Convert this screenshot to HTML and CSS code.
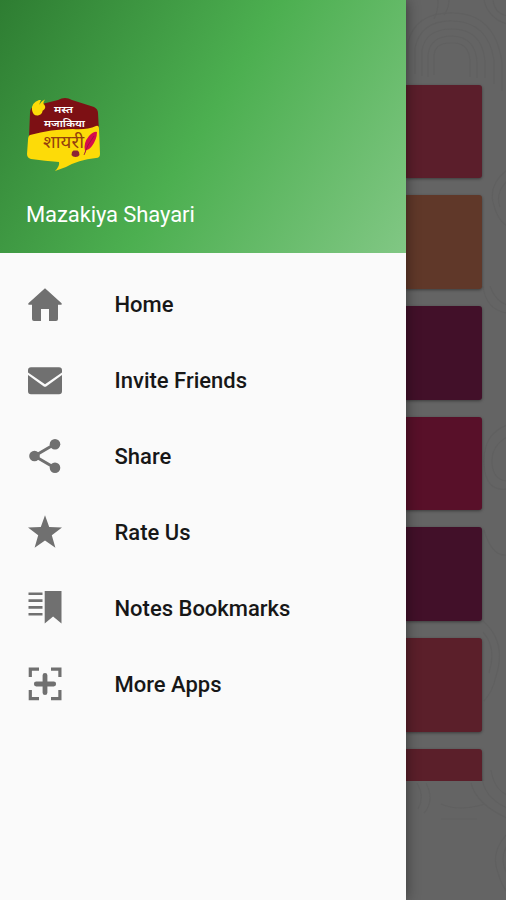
FILE: index.html
```html
<!DOCTYPE html>
<html lang="en">
<head>
<meta charset="utf-8">
<title>Mazakiya Shayari</title>
<link rel="stylesheet" href="styles.css">
</head>
<body>
<div class="screen">
  <aside class="drawer">
    <header class="drawer-header">
      <svg class="logo" viewBox="0 0 76 76">
        <path d="M4 16Q4 11 8 9L32 3Q39-1 46 3L68 10Q72 12 72 16L73 35L3 41Z" fill="#7d1014"/>
        <path d="M4 38Q25 32 47 32Q61 33 70 29Q73 28 73 32L74 57Q74 61 70 61Q52 63 40 70L29 74Q34 69 33 65Q19 64 5 62Q1 61 1 57L2 43Q2 39 4 38Z" fill="#fddb08"/>
        <path d="M13 3Q5 6 6 13Q7 19 12 18.5Q18 17 16 11L13.500 9.500Q13 6 15 3ZM19 2.500Q13 5 13.500 10Q15 15 17 13.500Q20.500 11 18.500 8L17.500 7Q17 5 19 2.500Z" fill="#fddb08"/>
        <text class="logo-small" x="28" y="16" textLength="19" lengthAdjust="spacingAndGlyphs">मस्त</text>
        <text class="logo-small" x="18" y="30" textLength="41" lengthAdjust="spacingAndGlyphs">मजाकिया</text>
        <text class="logo-large" x="17" y="50.500" textLength="41" lengthAdjust="spacingAndGlyphs">शायरी</text>
        <path d="M59 54Q57 46 63 39Q68 34 71 35Q71 42 66 49Q63 53 60 53L58.500 58" fill="#d70c4c"/>
        <path d="M58 58Q61 48 68 39" fill="none" stroke="#8f1740" stroke-width=".8"/>
        <path d="M46 55l1.500-1.500h4L53 55l.5 3q-1 2-4 2t-4-2z" fill="#8b2435"/>
      </svg>
      <div class="app-name">Mazakiya Shayari</div>
    </header>
    <nav class="menu">
      <a class="item"><svg class="icon" viewBox="0 0 36 36"><path d="M18 1.2 1.400 16.200Q.6 17.800 2.200 17.800H5V32Q5 34 7 34H14V22H22V34H29Q31 34 31 32V17.800H33.800Q35.400 17.800 34.600 16.200Z"/></svg>Home</a>
      <a class="item"><svg class="icon" viewBox="0 0 36 36"><path d="M4 4.300H32Q35 4.300 35 7.300V9.500L18 21.300 1 9.500V7.300Q1 4.300 4 4.300ZM1 12 16.500 23.300Q18 24.400 19.500 23.300L35 12V28.300Q35 31.300 32 31.300H4Q1 31.300 1 28.300Z"/></svg>Invite Friends</a>
      <a class="item"><svg class="icon" viewBox="0 0 36 36"><path d="M28 6 7.500 18 28 30" fill="none" stroke="#707070" stroke-width="3"/><circle cx="28" cy="6.200" r="5.300"/><circle cx="7.500" cy="18" r="5.300"/><circle cx="28" cy="29.800" r="5.300"/></svg>Share</a>
      <a class="item"><svg class="icon" viewBox="0 0 36 36"><path d="M18 1.200 22.200 13 35 13.400 24.800 21.200 28.400 33.800 18 26.600 7.600 33.800 11.200 21.200 1 13.400 13.800 13Z"/></svg>Rate Us</a>
      <a class="item"><svg class="icon" viewBox="0 0 36 36"><path d="M1.500 2.500H15.500V5.100H1.500ZM1.500 9.300H15.500V11.900H1.500ZM1.500 16.100H15.500V18.700H1.500ZM1.500 22.900H15.500V25.500H1.500ZM17.700 1H34.500V33.500L26.100 26.500 17.700 33.500Z"/></svg>Notes Bookmarks</a>
      <a class="item"><svg class="icon" viewBox="0 0 36 36"><path d="M3.300 11V3.200H12M24 3.200H32.900V11M32.900 24V32.700H24M12 32.700H3.300V24" fill="none" stroke="#707070" stroke-width="3.200"/><path d="M18 9.300V26.700M9.300 18H26.700" fill="none" stroke="#707070" stroke-width="4.800" stroke-linecap="round"/></svg>More Apps</a>
    </nav>
  </aside>
  <main class="content">
    <svg class="pattern" viewBox="0 0 100 900">
      <path d="M28 75V57Q28 43 44 43H49Q63 44 64 61V77M22 77V55Q24 36 46 36Q70 37 71 63V78M16 76V51Q19 29 46 29Q76 29 79 61V78M9 74V48Q15 20 47 21Q82 22 88 60V84M2 70V42Q10 12 48 13Q89 14 96 62V91"/>
      <path d="M28 19Q34 7 31-5M38 15Q45 5 42-5M78 0Q82 18 101 24M87 0Q88 13 101 16"/>
      <path d="M101 170Q83 184 87 202T101 226M101 181Q89 193 94 207M77 286Q80 310 101 313M84 286Q89 301 101 305M101 425Q77 434 78 463T101 489M101 437Q85 446 86 463T101 481M78 530Q86 557 101 555M77 621Q101 642 90 676Q87 691 78 701M77 632Q91 648 83 673"/>
      <path d="M11 783Q19 797 12 809M20 783Q29 801 18 813M35 804Q53 812 79 804M35 819H71M65 783Q70 804 101 818M76 776Q77 797 101 808M85 770Q88 789 101 795M101 834Q84 852 92 873Q95 884 101 892M101 846Q93 858 101 874"/>
    </svg>
    <div class="cards">
      <div class="card crimson"></div>
      <div class="card brown"></div>
      <div class="card plum"></div>
      <div class="card ruby"></div>
      <div class="card plum"></div>
      <div class="card red"></div>
      <div class="card red"></div>
    </div>
  </main>
</div>
</body>
</html>
```

FILE: styles.css
```css
* { box-sizing: border-box; }
body { margin: 0; font-family: Roboto, "Noto Sans", sans-serif; }
.screen { display: flex; width: 506px; height: 900px; overflow: hidden; }
.drawer {
  position: relative;
  z-index: 1;
  width: 406px;
  flex: none;
  background: #fafafa;
  box-shadow: 0 0 13px rgba(0, 0, 0, .45);
}
.drawer-header {
  height: 253px;
  padding: 97px 26px 0;
  background: linear-gradient(121.9deg, #2e7d32, #4caf50 50%, #81c784);
}
.logo { display: block; width: 76px; height: 76px; }
.logo-small { font: 600 10px "Noto Sans", sans-serif; fill: #fff; }
.logo-large { font: 400 17px "Noto Sans", sans-serif; fill: #94400d; }
.app-name { margin-top: 29px; font-size: 22px; line-height: 26px; letter-spacing: -.1px; color: #fff; white-space: nowrap; }
.menu { padding-top: 13.7px; }
.item {
  display: flex;
  align-items: center;
  gap: 51.5px;
  height: 75.9px;
  padding-left: 27px;
  font-size: 22px;
  font-weight: 500;
  color: #171717;
}
.icon { width: 36px; height: 36px; flex: none; fill: #707070; }
.content { display: grid; flex: 1; background: #646464; }
.pattern { grid-area: 1 / 1; width: 100px; height: 900px; fill: none; stroke: #606060; stroke-width: 1.2; }
.cards {
  grid-area: 1 / 1;
  display: flex;
  flex-direction: column;
  gap: 17px;
  width: 80px;
  height: 781px;
  padding-top: 84.7px;
  overflow: hidden;
}
.card {
  flex: none;
  height: 93.7px;
  width: 76.3px;
  border-radius: 0 3px 3px 0;
  box-shadow: 0 1px 3px rgba(0, 0, 0, .4);
}
.crimson { background: #5b1e2b; }
.brown { background: #603829; }
.plum { background: #421029; }
.ruby { background: #581029; }
.red { background: #5b1f2a; }
```
